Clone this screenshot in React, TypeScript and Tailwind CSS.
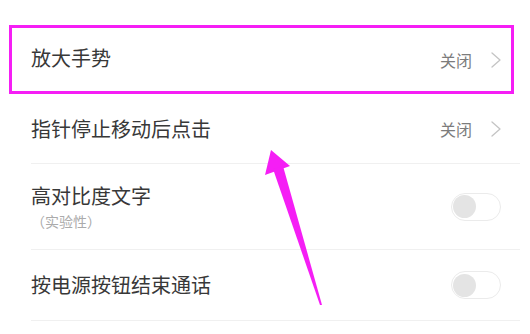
import React from 'react';

const font = { fontFamily: '"Noto Sans CJK SC", "Noto Sans", sans-serif' };

function Chevron() {
  return (
    <svg width="10" height="16" viewBox="0 0 10 16" fill="none">
      <polyline points="1,1 9,8 1,15" stroke="#c4c4c4" strokeWidth="1.3" strokeLinejoin="round" strokeLinecap="round" />
    </svg>
  );
}

function Toggle() {
  return (
    <div className="w-[50px] h-[28px] rounded-full border border-[#ebebeb] bg-white flex items-center pl-[1px]">
      <div className="w-[23px] h-[23px] rounded-full bg-[#e4e4e4]" />
    </div>
  );
}

function Value({ text }: { text: string }) {
  return (
    <div className="flex items-center gap-[19px]">
      <span className="text-[16px] text-[#7c7c7c]">{text}</span>
      <Chevron />
    </div>
  );
}

export default function App() {
  return (
    <div className="relative w-[530px] h-[334px] bg-white overflow-hidden" style={font}>
      <div className="pt-[25px] flex flex-col">
        {/* highlighted row */}
        <div className="ml-[9px] mr-[16px] h-[69px] border-[3px] border-[#f51ef5] pl-[19px] pr-[10px] flex items-center justify-between">
          <span className="text-[20px] text-[#383838] pb-[3px]">放大手势</span>
          <Value text="关闭" />
        </div>

        <div className="ml-[31px] mr-[10px] h-[70px] border-b border-[#f0f0f0] pr-[19px] flex items-center justify-between">
          <span className="text-[20px] text-[#383838]">指针停止移动后点击</span>
          <Value text="关闭" />
        </div>

        <div className="ml-[31px] mr-[10px] h-[86px] border-b border-[#f0f0f0] pr-[19px] flex items-center justify-between">
          <div className="flex flex-col">
            <span className="text-[20px] leading-[26px] text-[#383838]">高对比度文字</span>
            <span className="text-[14px] leading-[20px] text-[#ababab] mt-[2px]">（实验性）</span>
          </div>
          <Toggle />
        </div>

        <div className="ml-[31px] mr-[10px] h-[71px] border-b border-[#f0f0f0] pr-[19px] flex items-center justify-between">
          <span className="text-[20px] text-[#383838]">按电源按钮结束通话</span>
          <Toggle />
        </div>
      </div>

      {/* annotation arrow */}
      <svg className="absolute inset-0 pointer-events-none" width="530" height="334" viewBox="0 0 530 334">
        <polygon points="271,150 265,175 290,166" fill="#f51ef5" />
        <polygon points="273,169 283,166 322,305 320,305" fill="#f51ef5" />
      </svg>
    </div>
  );
}
